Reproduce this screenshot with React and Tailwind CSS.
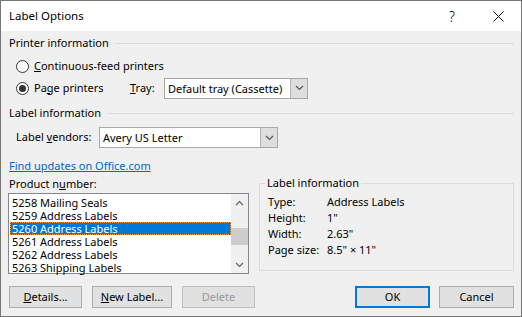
import React from 'react';

const Chevron = ({ up = false, className = '' }) => (
    <svg width="9" height="6" viewBox="0 0 9 6" className={className}>
        <polyline
            points={up ? '1,5 4.5,1.5 8,5' : '1,1 4.5,4.5 8,1'}
            fill="none"
            stroke="currentColor"
            strokeWidth="1.2"
        />
    </svg>
);

const Radio = ({ checked }) => (
    <span className="w-[13px] h-[13px] rounded-full border border-[#333] bg-white flex items-center justify-center shrink-0">
        {checked && <span className="w-[7px] h-[7px] rounded-full bg-[#333]" />}
    </span>
);

const Combo = ({ value, className = '' }) => (
    <div className={`flex h-[21px] border border-[#a8a8a8] bg-white ${className}`}>
        <div className="flex-1 flex items-center pl-[3px] text-black leading-none truncate">{value}</div>
        <div className="w-[17px] flex items-center justify-center bg-[#dedede] border-l border-[#b4b4b4] text-[#555]">
            <Chevron />
        </div>
    </div>
);

const SectionHeader = ({ title, className = '' }) => (
    <div className={`flex items-center gap-[6px] ${className}`}>
        <span>{title}</span>
        <div className="flex-1 h-px bg-[#dcdcdc]" />
    </div>
);

const Button = ({ children, disabled, primary, className = '' }) => (
    <button
        className={`h-[22px] flex items-center justify-center ${
            primary ? 'border-2 border-[#0078d7]' : 'border border-[#adadad]'
        } ${disabled ? 'bg-[#e1e1e1] text-[#9a9a9a] border-[#bfbfbf]' : 'bg-[#e1e1e1] text-black'} ${className}`}
    >
        {children}
    </button>
);

const products = [
    '5258 Mailing Seals',
    '5259 Address Labels',
    '5260 Address Labels',
    '5261 Address Labels',
    '5262 Address Labels',
    '5263 Shipping Labels',
];

const details = [
    ['Type:', 'Address Labels'],
    ['Height:', '1"'],
    ['Width:', '2.63"'],
    ['Page size:', '8.5" × 11"'],
];

export default function App() {
    return (
        <div
            className="w-[522px] h-[317px] border border-[#777] bg-[#f0f0f0] flex flex-col text-[11px] text-black overflow-hidden"
            style={{ fontFamily: '"Noto Sans", sans-serif' }}
        >
            {/* title bar */}
            <div className="h-[30px] bg-white flex items-center pl-[8px] shrink-0">
                <span className="flex-1 text-[11.5px]">Label Options</span>
                <span className="w-[46px] text-center text-[14px] font-light">?</span>
                <span className="w-[46px] flex items-center justify-center">
                    <svg width="11" height="11" viewBox="0 0 11 11">
                        <path d="M0.5 0.5 L10.5 10.5 M10.5 0.5 L0.5 10.5" stroke="#111" strokeWidth="1" />
                    </svg>
                </span>
            </div>

            <div className="flex-1 flex flex-col px-[7px]">
                <SectionHeader title="Printer information" className="h-[25px] pl-px" />

                <div className="h-[21px] flex items-center gap-[5px] pl-[8px]">
                    <Radio />
                    <span>
                        <u>C</u>ontinuous-feed printers
                    </span>
                </div>
                <div className="h-[22px] flex items-center pl-[8px]">
                    <Radio checked />
                    <span className="ml-[5px] w-[96px]">
                        Pa<u>g</u>e printers
                    </span>
                    <span className="w-[34px]">
                        <u>T</u>ray:
                    </span>
                    <Combo value="Default tray (Cassette)" className="w-[144px]" />
                </div>

                <SectionHeader title="Label information" className="h-[28px] pl-px" />

                <div className="h-[21px] flex items-center pl-[8px]">
                    <span className="w-[83px]">
                        Label <u>v</u>endors:
                    </span>
                    <Combo value="Avery US Letter" className="w-[179px]" />
                </div>

                <div className="h-[27px] flex items-end pl-px">
                    <a className="text-[#0066cc] underline leading-[18px]">Find updates on Office.com</a>
                </div>

                <div className="flex gap-[10px]">
                    <div className="w-[241px] flex flex-col">
                        <div className="h-[18px] flex items-center pl-px">
                            Product n<u>u</u>mber:
                        </div>
                        <div className="h-[81px] border border-[#828790] bg-white flex">
                            <div className="flex-1 pt-[2px] pl-px">
                                {products.map((p, i) => (
                                    <div
                                        key={p}
                                        className={`h-[13px] leading-[13px] pl-[2px] ${
                                            i === 2
                                                ? 'bg-[#0078d7] text-white outline-1 outline-dotted outline-[#f29b3a] -outline-offset-1'
                                                : ''
                                        }`}
                                    >
                                        {p}
                                    </div>
                                ))}
                            </div>
                            <div className="w-[17px] bg-[#f0f0f0] flex flex-col items-center text-[#606060]">
                                <div className="h-[17px] flex items-center justify-center">
                                    <Chevron up />
                                </div>
                                <div className="flex-1 w-full pt-[17px]">
                                    <div className="h-[17px] bg-[#cdcdcd]" />
                                </div>
                                <div className="h-[17px] flex items-center justify-center">
                                    <Chevron />
                                </div>
                            </div>
                        </div>
                    </div>

                    <fieldset className="flex-1 h-[96px] border border-[#dcdcdc] px-[8px] pb-[6px]">
                        <legend className="px-[2px] ml-[-3px]">Label information</legend>
                        <div className="flex flex-col pt-[3px]">
                            {details.map(([k, v]) => (
                                <div key={k} className="h-[16px] flex items-center">
                                    <span className="w-[59px]">{k}</span>
                                    <span>{v}</span>
                                </div>
                            ))}
                        </div>
                    </fieldset>
                </div>

                <div className="flex items-center mt-[12px] pl-px">
                    <Button className="w-[73px]">
                        <span>
                            <u>D</u>etails...
                        </span>
                    </Button>
                    <Button className="w-[80px] ml-[10px]">
                        <span>
                            <u>N</u>ew Label...
                        </span>
                    </Button>
                    <Button disabled className="w-[73px] ml-[10px]">
                        Delete
                    </Button>
                    <div className="flex-1" />
                    <Button primary className="w-[75px]">
                        OK
                    </Button>
                    <Button className="w-[75px] ml-[9px]">Cancel</Button>
                </div>
            </div>
        </div>
    );
}
